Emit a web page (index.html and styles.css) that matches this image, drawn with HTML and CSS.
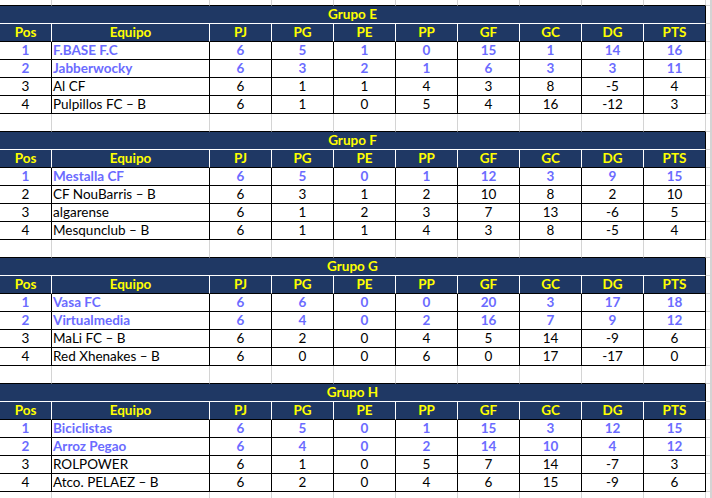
FILE: index.html
```html
<!DOCTYPE html>
<html lang="es">
<head>
<meta charset="utf-8">
<title>Clasificación</title>
<link rel="stylesheet" href="styles.css">
</head>
<body>
<div class="sheet">
  <div class="row edge"><div class="t"></div><div class="t"></div><div class="t"></div><div class="t"></div><div class="t"></div><div class="t"></div><div class="t"></div><div class="t"></div><div class="t"></div><div class="t"></div><div></div><div></div></div>

  <div class="row title"><div class="t span">Grupo E</div><div></div><div></div></div>
  <div class="row head"><div class="t">Pos</div><div class="t">Equipo</div><div class="t">PJ</div><div class="t">PG</div><div class="t">PE</div><div class="t">PP</div><div class="t">GF</div><div class="t">GC</div><div class="t">DG</div><div class="t">PTS</div><div></div><div></div></div>
  <div class="row data hi"><div class="t">1</div><div class="t name">F.BASE F.C</div><div class="t">6</div><div class="t">5</div><div class="t">1</div><div class="t">0</div><div class="t">15</div><div class="t">1</div><div class="t">14</div><div class="t">16</div><div></div><div></div></div>
  <div class="row data hi"><div class="t">2</div><div class="t name">Jabberwocky</div><div class="t">6</div><div class="t">3</div><div class="t">2</div><div class="t">1</div><div class="t">6</div><div class="t">3</div><div class="t">3</div><div class="t">11</div><div></div><div></div></div>
  <div class="row data"><div class="t">3</div><div class="t name">Al CF</div><div class="t">6</div><div class="t">1</div><div class="t">1</div><div class="t">4</div><div class="t">3</div><div class="t">8</div><div class="t">-5</div><div class="t">4</div><div></div><div></div></div>
  <div class="row data"><div class="t">4</div><div class="t name">Pulpillos FC – B</div><div class="t">6</div><div class="t">1</div><div class="t">0</div><div class="t">5</div><div class="t">4</div><div class="t">16</div><div class="t">-12</div><div class="t">3</div><div></div><div></div></div>
  <div class="row gap"><div class="t"></div><div class="t"></div><div class="t"></div><div class="t"></div><div class="t"></div><div class="t"></div><div class="t"></div><div class="t"></div><div class="t"></div><div class="t"></div><div></div><div></div></div>

  <div class="row title"><div class="t span">Grupo F</div><div></div><div></div></div>
  <div class="row head"><div class="t">Pos</div><div class="t">Equipo</div><div class="t">PJ</div><div class="t">PG</div><div class="t">PE</div><div class="t">PP</div><div class="t">GF</div><div class="t">GC</div><div class="t">DG</div><div class="t">PTS</div><div></div><div></div></div>
  <div class="row data hi"><div class="t">1</div><div class="t name">Mestalla CF</div><div class="t">6</div><div class="t">5</div><div class="t">0</div><div class="t">1</div><div class="t">12</div><div class="t">3</div><div class="t">9</div><div class="t">15</div><div></div><div></div></div>
  <div class="row data"><div class="t">2</div><div class="t name">CF NouBarris – B</div><div class="t">6</div><div class="t">3</div><div class="t">1</div><div class="t">2</div><div class="t">10</div><div class="t">8</div><div class="t">2</div><div class="t">10</div><div></div><div></div></div>
  <div class="row data"><div class="t">3</div><div class="t name">algarense</div><div class="t">6</div><div class="t">1</div><div class="t">2</div><div class="t">3</div><div class="t">7</div><div class="t">13</div><div class="t">-6</div><div class="t">5</div><div></div><div></div></div>
  <div class="row data"><div class="t">4</div><div class="t name">Mesqunclub – B</div><div class="t">6</div><div class="t">1</div><div class="t">1</div><div class="t">4</div><div class="t">3</div><div class="t">8</div><div class="t">-5</div><div class="t">4</div><div></div><div></div></div>
  <div class="row gap"><div class="t"></div><div class="t"></div><div class="t"></div><div class="t"></div><div class="t"></div><div class="t"></div><div class="t"></div><div class="t"></div><div class="t"></div><div class="t"></div><div></div><div></div></div>

  <div class="row title"><div class="t span">Grupo G</div><div></div><div></div></div>
  <div class="row head"><div class="t">Pos</div><div class="t">Equipo</div><div class="t">PJ</div><div class="t">PG</div><div class="t">PE</div><div class="t">PP</div><div class="t">GF</div><div class="t">GC</div><div class="t">DG</div><div class="t">PTS</div><div></div><div></div></div>
  <div class="row data hi"><div class="t">1</div><div class="t name">Vasa FC</div><div class="t">6</div><div class="t">6</div><div class="t">0</div><div class="t">0</div><div class="t">20</div><div class="t">3</div><div class="t">17</div><div class="t">18</div><div></div><div></div></div>
  <div class="row data hi"><div class="t">2</div><div class="t name">Virtualmedia</div><div class="t">6</div><div class="t">4</div><div class="t">0</div><div class="t">2</div><div class="t">16</div><div class="t">7</div><div class="t">9</div><div class="t">12</div><div></div><div></div></div>
  <div class="row data"><div class="t">3</div><div class="t name">MaLi FC – B</div><div class="t">6</div><div class="t">2</div><div class="t">0</div><div class="t">4</div><div class="t">5</div><div class="t">14</div><div class="t">-9</div><div class="t">6</div><div></div><div></div></div>
  <div class="row data"><div class="t">4</div><div class="t name">Red Xhenakes – B</div><div class="t">6</div><div class="t">0</div><div class="t">0</div><div class="t">6</div><div class="t">0</div><div class="t">17</div><div class="t">-17</div><div class="t">0</div><div></div><div></div></div>
  <div class="row gap"><div class="t"></div><div class="t"></div><div class="t"></div><div class="t"></div><div class="t"></div><div class="t"></div><div class="t"></div><div class="t"></div><div class="t"></div><div class="t"></div><div></div><div></div></div>

  <div class="row title"><div class="t span">Grupo H</div><div></div><div></div></div>
  <div class="row head"><div class="t">Pos</div><div class="t">Equipo</div><div class="t">PJ</div><div class="t">PG</div><div class="t">PE</div><div class="t">PP</div><div class="t">GF</div><div class="t">GC</div><div class="t">DG</div><div class="t">PTS</div><div></div><div></div></div>
  <div class="row data hi"><div class="t">1</div><div class="t name">Biciclistas</div><div class="t">6</div><div class="t">5</div><div class="t">0</div><div class="t">1</div><div class="t">15</div><div class="t">3</div><div class="t">12</div><div class="t">15</div><div></div><div></div></div>
  <div class="row data hi"><div class="t">2</div><div class="t name">Arroz Pegao</div><div class="t">6</div><div class="t">4</div><div class="t">0</div><div class="t">2</div><div class="t">14</div><div class="t">10</div><div class="t">4</div><div class="t">12</div><div></div><div></div></div>
  <div class="row data"><div class="t">3</div><div class="t name">ROLPOWER</div><div class="t">6</div><div class="t">1</div><div class="t">0</div><div class="t">5</div><div class="t">7</div><div class="t">14</div><div class="t">-7</div><div class="t">3</div><div></div><div></div></div>
  <div class="row data"><div class="t">4</div><div class="t name">Atco. PELAEZ – B</div><div class="t">6</div><div class="t">2</div><div class="t">0</div><div class="t">4</div><div class="t">6</div><div class="t">15</div><div class="t">-9</div><div class="t">6</div><div></div><div></div></div>
  <div class="row tail"><div class="t"></div><div class="t"></div><div class="t"></div><div class="t"></div><div class="t"></div><div class="t"></div><div class="t"></div><div class="t"></div><div class="t"></div><div class="t"></div><div></div><div></div></div>
</div>
</body>
</html>
```

FILE: styles.css
```css
html, body {
  margin: 0;
  padding: 0;
  background: #ffffff;
  overflow: hidden;
}

.sheet {
  width: 712px;
  font-family: Lato, "Open Sans", sans-serif;
  font-size: 13.5px;
  color: #000000;
}

.row {
  display: grid;
  grid-template-columns: 52px 158px 62px 62px 62px 62px 62px 62px 62px 62px 5px 1fr;
  height: 18px;
}

.row > div {
  box-sizing: border-box;
  border-right: 1px solid #d4d4d4;
  border-bottom: 1px solid #d4d4d4;
  line-height: 16px;
  text-align: center;
  white-space: nowrap;
  overflow: hidden;
}

.row.edge {
  height: 6px;
}

.row.edge > .t,
.row.gap > .t {
  border-bottom-color: #000000;
}

.row.tail {
  height: 7px;
}

.row.title > .span {
  grid-column: 1 / 11;
  background: #1f3864;
  color: #ffff00;
  font-weight: bold;
  border-right-color: #000000;
  border-bottom-color: #ffffff;
}

.row.head > .t {
  background: #1f3864;
  color: #ffff00;
  font-weight: bold;
  border-right-color: #ffffff;
  border-bottom-color: #000000;
}

.row.head > .t:nth-child(10) {
  border-right-color: #000000;
}

.row.data > .t {
  border-right-color: #000000;
  border-bottom-color: #000000;
}

.row.data > .name {
  text-align: left;
  padding-left: 1px;
}

.row.data.hi {
  color: #6b6bff;
  font-weight: bold;
}
```
